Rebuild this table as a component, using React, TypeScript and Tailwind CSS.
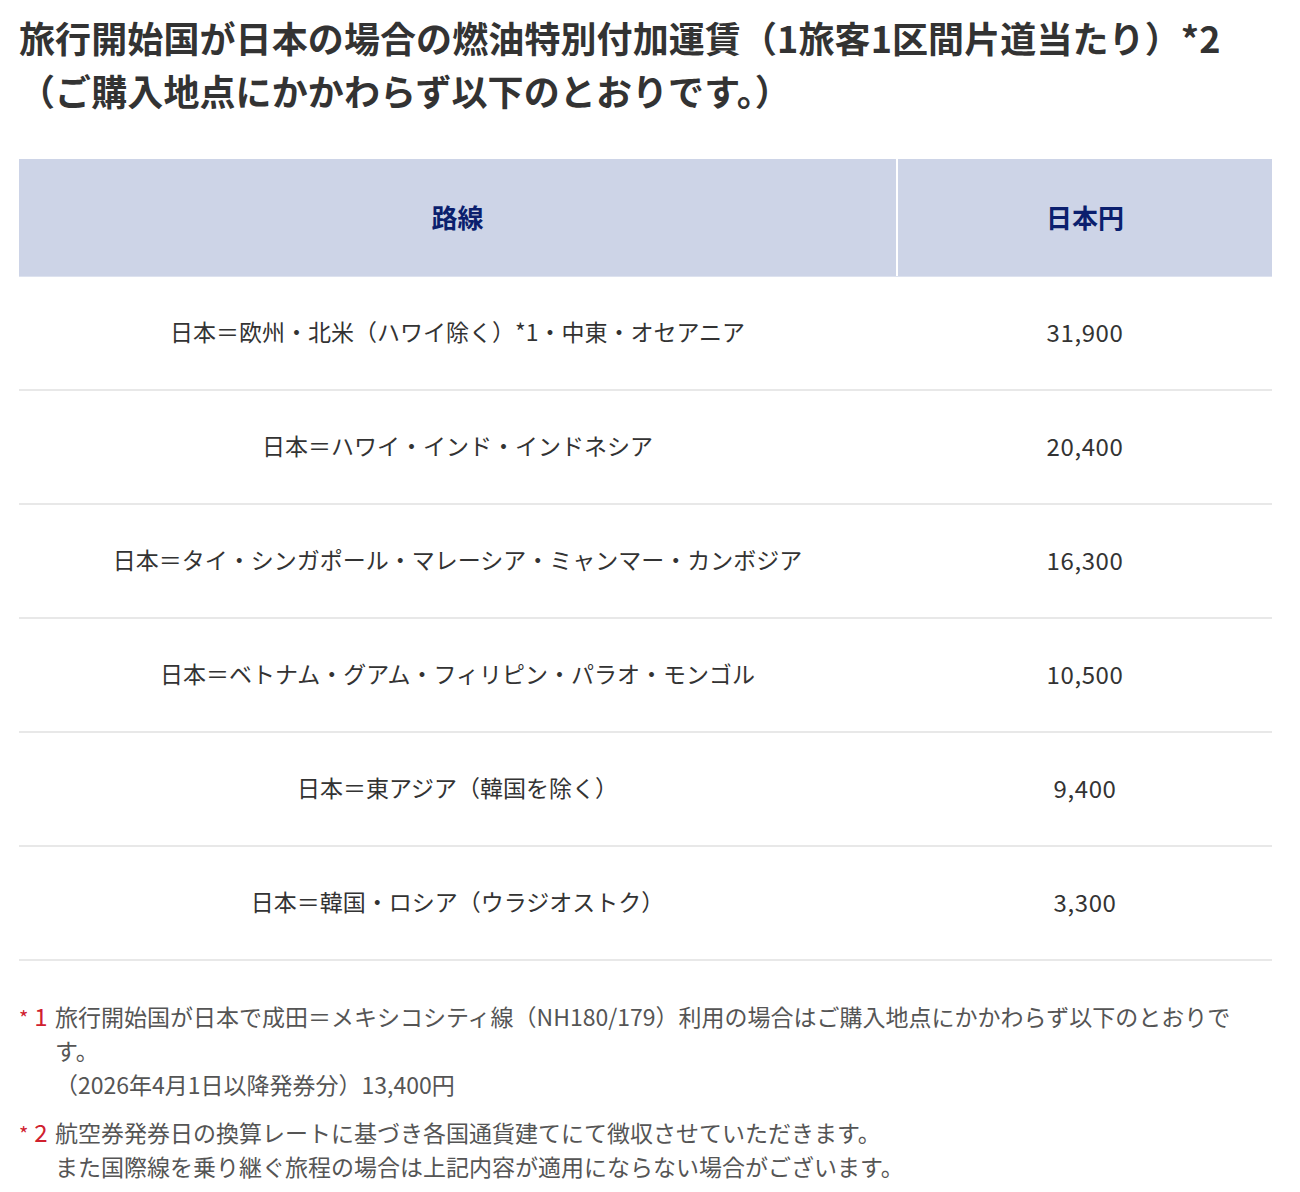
import React from "react";

const rows: [string, string][] = [
  ["日本＝欧州・北米（ハワイ除く）*1・中東・オセアニア", "31,900"],
  ["日本＝ハワイ・インド・インドネシア", "20,400"],
  ["日本＝タイ・シンガポール・マレーシア・ミャンマー・カンボジア", "16,300"],
  ["日本＝ベトナム・グアム・フィリピン・パラオ・モンゴル", "10,500"],
  ["日本＝東アジア（韓国を除く）", "9,400"],
  ["日本＝韓国・ロシア（ウラジオストク）", "3,300"],
];

export default function App() {
  return (
    <div
      className="min-h-[1192px] w-[1300px] bg-white text-[#333]"
      style={{ fontFamily: '"Noto Sans CJK JP", "Noto Sans", sans-serif' }}
    >
      <div className="pl-[19px] pr-[28px] pt-[11px]">
        <h2 className="text-[36px] font-bold leading-[53px] tracking-[0.1px] text-[#333]">
          旅行開始国が日本の場合の燃油特別付加運賃（1旅客1区間片道当たり）*2
          <br />
          （ご購入地点にかかわらず以下のとおりです。）
        </h2>

        <div className="mt-[42px] w-[1253px]">
          <div className="flex h-[118px] border-b border-[#dde2ef] bg-[#cdd4e7]">
            <div className="flex w-[877px] items-center justify-center pb-[2px] text-[26px] font-bold text-[#0b1f6e]">
              路線
            </div>
            <div className="w-[2px] bg-white" />
            <div className="flex flex-1 items-center justify-center pb-[2px] text-[26px] font-bold text-[#0b1f6e]">
              日本円
            </div>
          </div>
          {rows.map(([route, price]) => (
            <div
              key={route}
              className="flex h-[114px] border-b-2 border-[#e8e8e8] text-[23px] text-[#333]"
            >
              <div className="flex w-[877px] items-center justify-center pb-[3px]">{route}</div>
              <div className="w-[2px]" />
              <div className="flex flex-1 items-center justify-center pb-[3px] text-[24px] tracking-[0.6px]">
                {price}
              </div>
            </div>
          ))}
        </div>

        <div className="mt-[38px] text-[23px] leading-[34px] text-[#555]">
          <div className="flex">
            <div className="w-[36px] shrink-0 text-[#d0202e]">
              <span className="text-[20px]">*</span>
              <span className="ml-[6px] text-[24px]">1</span>
            </div>
            <div>
              旅行開始国が日本で成田＝メキシコシティ線（NH180/179）利用の場合はご購入地点にかかわらず以下のとおりで
              <br />
              す。
              <br />
              （2026年4月1日以降発券分）13,400円
            </div>
          </div>
          <div className="mt-[14px] flex">
            <div className="w-[36px] shrink-0 text-[#d0202e]">
              <span className="text-[20px]">*</span>
              <span className="ml-[6px] text-[24px]">2</span>
            </div>
            <div>
              航空券発券日の換算レートに基づき各国通貨建てにて徴収させていただきます。
              <br />
              また国際線を乗り継ぐ旅程の場合は上記内容が適用にならない場合がございます。
            </div>
          </div>
        </div>
      </div>
    </div>
  );
}
